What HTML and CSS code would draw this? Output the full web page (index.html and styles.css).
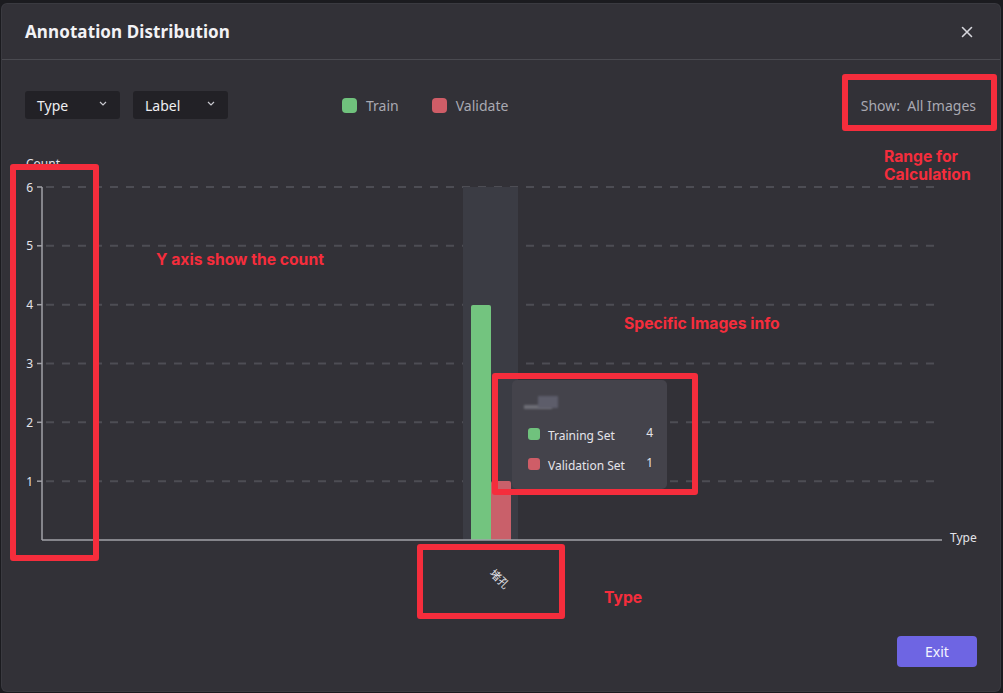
FILE: index.html
```html
<!DOCTYPE html>
<html>
<head>
<meta charset="utf-8">
<link rel="stylesheet" href="styles.css">
</head>
<body>
<div class="dialog">
  <div class="header">
    <h1 class="title">Annotation Distribution</h1>
    <svg class="close" width="12" height="12" viewBox="0 0 12 12"><path d="M1.5 1.5 L10.5 10.5 M10.5 1.5 L1.5 10.5" stroke="#d6d6dc" stroke-width="1.6" stroke-linecap="round"/></svg>
  </div>
  <div class="toolbar">
    <div class="select select-type"><span>Type</span><svg width="8" height="5" viewBox="0 0 8 5"><path d="M1 1 L4 4 L7 1" fill="none" stroke="#c8c8ce" stroke-width="1.2"/></svg></div>
    <div class="select select-label"><span>Label</span><svg width="8" height="5" viewBox="0 0 8 5"><path d="M1 1 L4 4 L7 1" fill="none" stroke="#c8c8ce" stroke-width="1.2"/></svg></div>
    <div class="legend">
      <span class="legend-item"><i class="swatch green"></i>Train</span>
      <span class="legend-item"><i class="swatch red"></i>Validate</span>
    </div>
    <div class="show">Show:&nbsp; All Images</div>
  </div>
  <svg class="chart" width="998" height="450" viewBox="0 0 998 450">
    <g class="grid" stroke="#4d4d54" stroke-width="2" stroke-dasharray="8 8">
      <line x1="44" y1="37" x2="940" y2="37"/>
      <line x1="44" y1="95.8" x2="940" y2="95.8"/>
      <line x1="44" y1="154.7" x2="940" y2="154.7"/>
      <line x1="44" y1="213.5" x2="940" y2="213.5"/>
      <line x1="44" y1="272.3" x2="940" y2="272.3"/>
      <line x1="44" y1="331.2" x2="940" y2="331.2"/>
    </g>
    <rect x="461" y="37" width="55" height="353" fill="#3b3c44"/>
    <path d="M469 390 V157 Q469 155 471 155 H487 Q489 155 489 157 V390 Z" fill="#73c47f"/>
    <path d="M489 390 V333 Q489 331 491 331 H507 Q509 331 509 333 V390 Z" fill="#c9606a"/>
    <g stroke="#a2a2a8" stroke-width="1.5">
      <line x1="40" y1="37" x2="40" y2="390"/>
      <line x1="40" y1="390" x2="940" y2="390"/>
      <line x1="35" y1="37" x2="40" y2="37"/>
      <line x1="35" y1="95.8" x2="40" y2="95.8"/>
      <line x1="35" y1="154.7" x2="40" y2="154.7"/>
      <line x1="35" y1="213.5" x2="40" y2="213.5"/>
      <line x1="35" y1="272.3" x2="40" y2="272.3"/>
      <line x1="35" y1="331.2" x2="40" y2="331.2"/>
    </g>
    <g class="tick" text-anchor="end">
      <text x="31" y="41.5">6</text>
      <text x="31" y="100.3">5</text>
      <text x="31" y="159.2">4</text>
      <text x="31" y="218">3</text>
      <text x="31" y="276.8">2</text>
      <text x="31" y="335.7">1</text>
    </g>
    <text class="tick" x="24" y="18">Count</text>
    <text class="tick" x="948" y="392">Type</text>
    <text class="tick cjk" x="0" y="0" transform="translate(487 424) rotate(45)">堵孔</text>
  </svg>
  <div class="footer">
    <button class="exit">Exit</button>
  </div>

  <div class="tooltip">
    <div class="tip-title"><span class="blur1"></span><span class="blur2"></span></div>
    <div class="tip-row"><i class="dot green"></i><span class="tip-name">Training Set</span><span class="tip-val">4</span></div>
    <div class="tip-row"><i class="dot red"></i><span class="tip-name">Validation Set</span><span class="tip-val">1</span></div>
  </div>

  <div class="mark mark-range"></div>
  <div class="note note-range">Range for<br>Calculation</div>
  <div class="mark mark-y"></div>
  <div class="note note-y">Y axis show the count</div>
  <div class="mark mark-tip"></div>
  <div class="note note-tip">Specific Images info</div>
  <div class="mark mark-type"></div>
  <div class="note note-type">Type</div>
</div>
</body>
</html>
```

FILE: styles.css
```css
html, body {
  margin: 0;
  padding: 0;
  background: #1b1b1f;
  width: 1003px;
  height: 693px;
  overflow: hidden;
  font-family: "Noto Sans", "Open Sans", sans-serif;
}

.dialog {
  position: relative;
  margin: 4px 3px 0 2px;
  height: 687px;
  background: #323137;
  border-radius: 5px;
  box-shadow: 0 0 0 1px #3a3a40;
}

.header {
  height: 55px;
  padding: 0 27px 0 23px;
  display: flex;
  align-items: center;
  justify-content: space-between;
  border-bottom: 1px solid #4a4a50;
}

.title {
  margin: 0;
  font-size: 17px;
  font-weight: 700;
  color: #f2f2f5;
  letter-spacing: 0.1px;
}

.close {
  margin-top: 1px;
}

.toolbar {
  display: flex;
  align-items: center;
  height: 28px;
  margin-top: 31px;
  padding: 0 24px 0 23px;
}

.select {
  height: 28px;
  background: #222126;
  border-radius: 3px;
  display: flex;
  align-items: center;
  justify-content: space-between;
  box-sizing: border-box;
  padding: 0 13px 0 12px;
  color: #eeeef2;
  font-size: 14px;
}

.select span {
  margin-top: 1px;
}

.select svg {
  margin-bottom: 3px;
}

.select-type {
  width: 95px;
}

.select-label {
  width: 95px;
  margin-left: 13px;
}

.legend {
  display: flex;
  align-items: center;
  margin-left: 114px;
  font-size: 14px;
  color: #a9a9b2;
}

.legend-item {
  display: flex;
  align-items: center;
  margin-right: 32px;
}

.legend-item + .legend-item {
  margin-left: 1px;
}

.swatch {
  display: inline-block;
  width: 15px;
  height: 15px;
  border-radius: 4px;
  margin-right: 9px;
}

.green { background: #70c27d; }
.red { background: #cf5d67; }

.show {
  margin-left: auto;
  font-size: 14px;
  color: #a9a9b2;
  margin-top: 1px;
}

.chart {
  display: block;
  margin-top: 31px;
}

.tick {
  font-family: "Noto Sans", "Noto Sans CJK SC", sans-serif;
  font-size: 12px;
  fill: #e4e4ea;
}

.cjk {
  font-family: "Noto Sans CJK SC", sans-serif;
  font-size: 11px;
}

.footer {
  display: flex;
  justify-content: flex-end;
  padding: 36px 23px 0 0;
}

.exit {
  width: 80px;
  height: 31px;
  border: none;
  border-radius: 4px;
  background: #6e65e3;
  color: #f4f4ff;
  font-family: "Noto Sans", sans-serif;
  font-size: 14px;
}

.tooltip {
  position: absolute;
  left: 510px;
  top: 376px;
  width: 155px;
  height: 109px;
  box-sizing: border-box;
  background: #44434b;
  border-radius: 5px;
  padding: 12px 14px 0 16px;
}

.tip-title {
  position: relative;
  height: 27px;
}

.blur1 {
  position: absolute;
  left: -4px;
  top: 13px;
  width: 28px;
  height: 4px;
  background: #6e6e76;
  filter: blur(0.8px);
}

.blur2 {
  position: absolute;
  left: 10px;
  top: 4px;
  width: 20px;
  height: 12px;
  background: #5d5d6a;
  filter: blur(0.8px);
}

.tip-row {
  display: flex;
  align-items: center;
  height: 30px;
  font-size: 12px;
  color: #e4e4ea;
}

.dot {
  display: inline-block;
  width: 12px;
  height: 12px;
  border-radius: 3px;
  margin-right: 8px;
}

.tip-name {
  flex: 1;
  margin-top: 2px;
}

.tip-val {
  margin-top: -4px;
}

.mark {
  position: absolute;
  border: 6px solid #f52d3c;
  border-radius: 3px;
  box-sizing: border-box;
}

.mark-range { left: 840px; top: 70px; width: 155px; height: 57px; }
.mark-y { left: 8px; top: 160px; width: 89px; height: 397px; }
.mark-tip { left: 490px; top: 369px; width: 206px; height: 122px; }
.mark-type { left: 415px; top: 540px; width: 148px; height: 75px; }

.note {
  position: absolute;
  font-family: "Inter", "Liberation Sans", sans-serif;
  font-weight: 700;
  font-size: 15.7px;
  color: #f52d3c;
  line-height: 18px;
}

.note-range { left: 882px; top: 144px; }
.note-y { left: 154px; top: 247px; }
.note-tip { left: 622px; top: 311px; }
.note-type { left: 602px; top: 585px; }
```
